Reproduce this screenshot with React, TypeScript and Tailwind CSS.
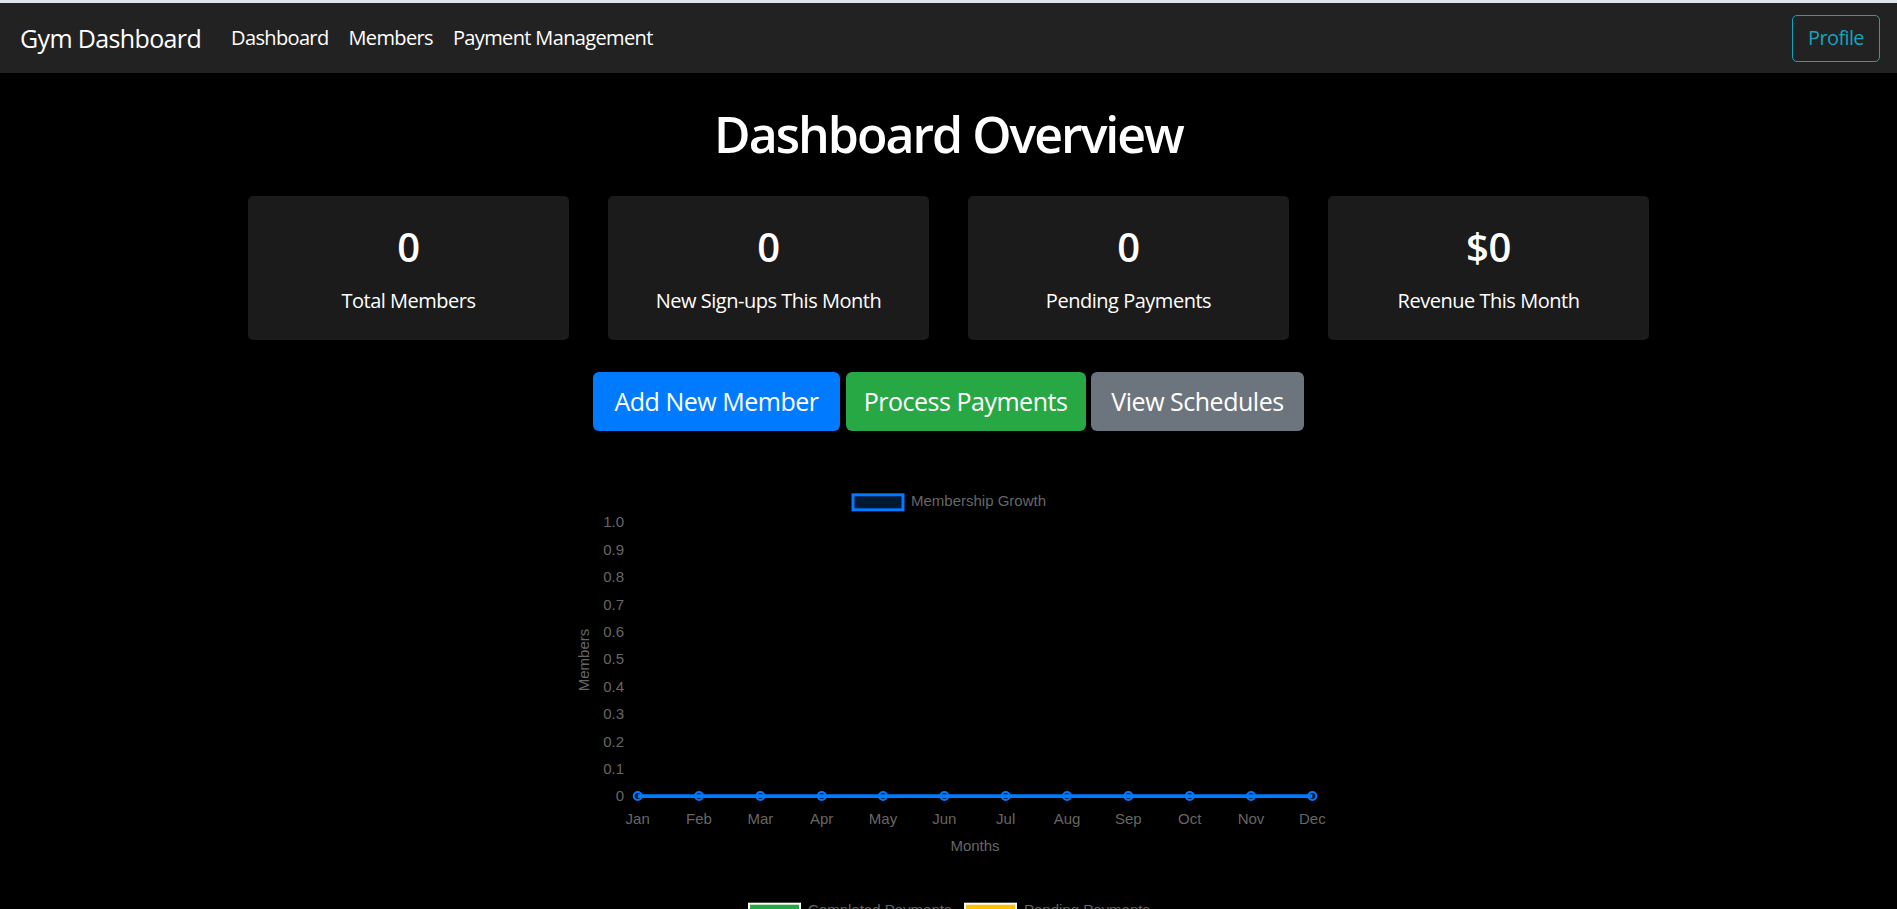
import React from "react";

const months = ["Jan","Feb","Mar","Apr","May","Jun","Jul","Aug","Sep","Oct","Nov","Dec"];

function GrowthChart() {
  const x0 = 68.7;
  const step = 61.33;
  const y0 = 316;
  const ticks = Array.from({ length: 11 }, (_, i) => i);
  return (
    <svg width="760" height="380" viewBox="0 0 760 380" className="block mt-[49px] tracking-normal" style={{ fontFamily: "'Liberation Sans', Arial, sans-serif" }}>
      <rect x="284" y="14.8" width="50" height="15" fill="#001933" stroke="#007bff" strokeWidth="3" />
      <text x="342" y="26.4" fontSize="15" fill="#666">Membership Growth</text>
      {ticks.map((i) => {
        const y = y0 - i * 27.4;
        const label = i === 10 ? "1.0" : i === 0 ? "0" : `0.${i}`;
        return (
          <text key={i} x="55" y={y + 5.4} fontSize="15" fill="#666" textAnchor="end">{label}</text>
        );
      })}
      <text x="20" y="180" fontSize="15" fill="#666" textAnchor="middle" transform="rotate(-90 20 180)">Members</text>
      <line x1={x0} y1={y0} x2={x0 + 11 * step} y2={y0} stroke="#007bff" strokeWidth="3.75" />
      {months.map((m, i) => (
        <circle key={m} cx={x0 + i * step} cy={y0} r="4" fill="rgba(0,123,255,0.2)" stroke="#007bff" strokeWidth="2" />
      ))}
      {months.map((m, i) => (
        <text key={m} x={x0 + i * step} y="344.4" fontSize="15" fill="#666" textAnchor="middle">{m}</text>
      ))}
      <text x="406" y="371" fontSize="15" fill="#666" textAnchor="middle">Months</text>
    </svg>
  );
}

function PaymentsChart() {
  return (
    <svg width="760" height="420" viewBox="0 0 760 420" className="block mt-[29px] tracking-normal" style={{ fontFamily: "'Liberation Sans', Arial, sans-serif" }}>
      <rect x="180" y="14.7" width="51" height="15" fill="#28a745" stroke="#ffffff" strokeWidth="2" />
      <text x="239" y="26.4" fontSize="15" fill="#666">Completed Payments</text>
      <rect x="396" y="14.7" width="51" height="15" fill="#ffc107" stroke="#ffffff" strokeWidth="2" />
      <text x="455" y="26.4" fontSize="15" fill="#666">Pending Payments</text>
      <circle cx="380" cy="220" r="170" fill="#28a745" stroke="#ffffff" strokeWidth="2" />
    </svg>
  );
}

function StatCard({ value, label }: { value: string; label: string }) {
  return (
    <div className="w-[321px] h-[144px] rounded-[5px] bg-[#1b1b1b] flex flex-col items-center pt-[27px]">
      <div className="text-[40px] leading-[48px] font-semibold">{value}</div>
      <div className="mt-[15px] text-[20px] leading-[30px]">{label}</div>
    </div>
  );
}

export default function App() {
  return (
    <div className="h-screen overflow-hidden bg-black text-white font-['Open_Sans','Noto_Sans',sans-serif] tracking-[-0.03em]">
      <div className="h-[3px] bg-[#dfe6e9]" />
      <nav className="h-[70px] bg-[#222222] flex items-center pl-[20px] pr-[17px] tracking-[-0.04em]">
        <span className="text-[25px] leading-[37px] mr-[20px]">Gym Dashboard</span>
        <a className="px-[10px] text-[20px] leading-[30px]">Dashboard</a>
        <a className="px-[10px] text-[20px] leading-[30px]">Members</a>
        <a className="px-[10px] text-[20px] leading-[30px]">Payment Management</a>
        <button className="ml-auto h-[47px] w-[88px] border border-[#17a2b8] rounded-[5px] text-[#17a2b8] text-[20px] leading-[30px]">Profile</button>
      </nav>
      <main className="flex flex-col items-center">
        <h1 className="mt-[31px] text-[50px] leading-[60px] font-semibold tracking-[-0.04em]">Dashboard Overview</h1>
        <div className="mt-[32px] flex gap-[39px]">
          <StatCard value="0" label="Total Members" />
          <StatCard value="0" label="New Sign-ups This Month" />
          <StatCard value="0" label="Pending Payments" />
          <StatCard value="$0" label="Revenue This Month" />
        </div>
        <div className="mt-[32px] flex gap-[5.5px]">
          <button className="w-[247px] h-[59px] rounded-[6px] bg-[#007bff] text-[25px] leading-[37px]">Add New Member</button>
          <button className="w-[240px] h-[59px] rounded-[6px] bg-[#28a745] text-[25px] leading-[37px]">Process Payments</button>
          <button className="w-[213px] h-[59px] rounded-[6px] bg-[#6c757d] text-[25px] leading-[37px]">View Schedules</button>
        </div>
        <GrowthChart />
        <PaymentsChart />
      </main>
    </div>
  );
}
